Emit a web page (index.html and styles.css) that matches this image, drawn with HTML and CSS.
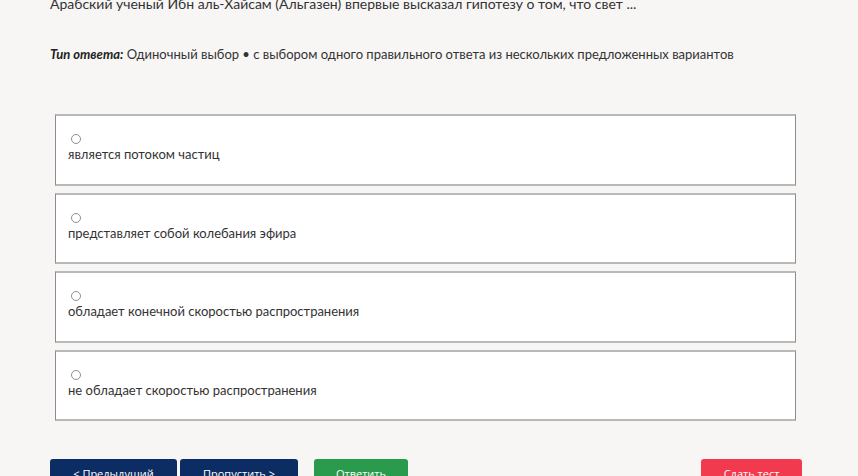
FILE: index.html
```html
<!DOCTYPE html>
<html lang="ru">
<head>
<meta charset="utf-8">
<link rel="stylesheet" href="styles.css">
</head>
<body>
<div class="page">
  <p class="question">Арабский ученый Ибн аль-Хайсам (Альгазен) впервые высказал гипотезу о том, что свет ...</p>
  <p class="type"><b><i>Тип ответа:</i></b> Одиночный выбор • с выбором одного правильного ответа из нескольких предложенных вариантов</p>
  <div class="options">
    <label class="option"><input type="radio" name="a" class="radio"><span class="opt-text">является потоком частиц</span></label>
    <label class="option"><input type="radio" name="a" class="radio"><span class="opt-text">представляет собой колебания эфира</span></label>
    <label class="option"><input type="radio" name="a" class="radio"><span class="opt-text">обладает конечной скоростью распространения</span></label>
    <label class="option"><input type="radio" name="a" class="radio"><span class="opt-text">не обладает скоростью распространения</span></label>
  </div>
  <div class="actions">
    <button class="btn btn-nav btn-prev">&lt; Предыдущий</button>
    <button class="btn btn-nav btn-skip">Пропустить &gt;</button>
    <button class="btn btn-answer">Ответить</button>
    <span class="spacer"></span>
    <button class="btn btn-finish">Сдать тест</button>
  </div>
</div>
</body>
</html>
```
FILE: styles.css
```css
html, body {
  margin: 0;
  padding: 0;
  background: #f7f6f4;
  overflow: hidden;
}
body {
  font-family: "Lato", "Open Sans", sans-serif;
  color: #333;
}
.page {
  width: 752px;
  margin: -6px 0 0 50px;
}
.question {
  margin: 0;
  font-size: 14px;
  line-height: 20px;
  color: #333;
}
.type {
  margin: 31px 0 0;
  font-size: 13px;
  line-height: 18px;
  color: #333;
}
.type b {
  color: #222;
}
.options {
  margin: 51px 6px 0 5px;
  display: flex;
  flex-direction: column;
  gap: 7px;
}
.option {
  display: flex;
  flex-direction: column;
  align-items: flex-start;
  background: #fff;
  border-left: 1px solid #8c8c8c;
  border-right: 1px solid #8c8c8c;
  border-top: 2px solid #b9b9b9;
  border-bottom: 2px solid #b9b9b9;
  padding: 14px 12px 0;
  box-sizing: border-box;
  height: 71.5px;
}
.radio {
  margin: 4px 0 0 3px;
  width: 10px;
  height: 10px;
  appearance: none;
  -webkit-appearance: none;
  border: 1px solid #8f8f8f;
  border-radius: 50%;
  background: #fff;
}
.opt-text {
  font-size: 13px;
  line-height: 18px;
  color: #333;
  margin-top: 1px;
}
.actions {
  display: flex;
  margin-top: 38px;
  gap: 3px;
}
.btn {
  border: 0;
  border-radius: 3px;
  color: #fff;
  font-family: "Open Sans", "Noto Sans", sans-serif;
  font-size: 11px;
  height: 30px;
  padding: 0;
  line-height: 26px;
  text-align: center;
}
.btn-nav {
  background: #0c2d63;
}
.btn-prev { width: 127px; }
.btn-skip { width: 118px; }
.btn-answer {
  background: #2a9b4c;
  width: 94px;
  margin-left: 13px;
}
.spacer { flex: 1; }
.btn-finish {
  background: #f23a4f;
  width: 101px;
}
```
